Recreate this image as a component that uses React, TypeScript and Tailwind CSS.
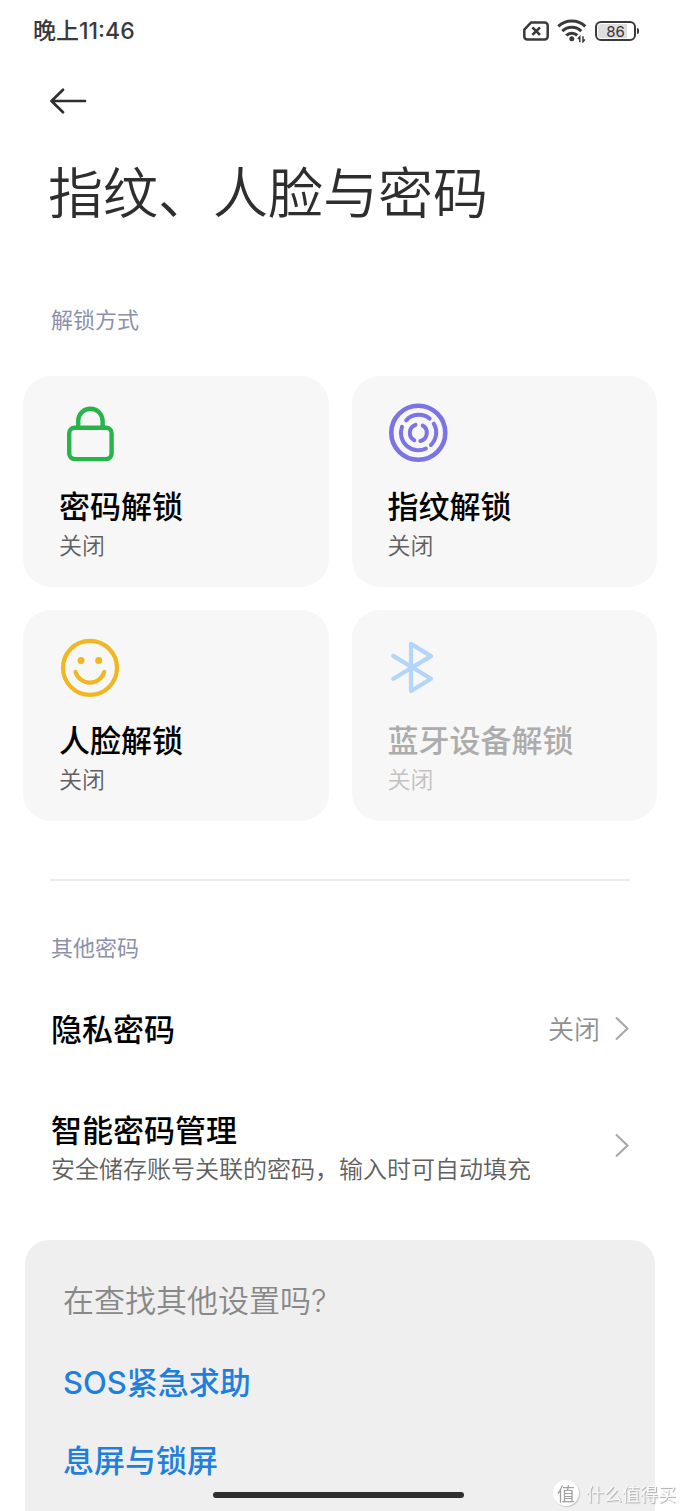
import type { ReactNode } from "react";

const LockIcon = () => (
  <svg viewBox="0 0 60 60" className="size-[60px]" fill="none" stroke="#28b44a" strokeWidth="4.4" aria-hidden="true">
    <rect x="10.2" y="24.7" width="42.4" height="31.4" rx="5.5" />
    <path d="M19.2 25V17.9a12.2 12.2 0 0 1 24.4 0V25" />
  </svg>
);

const FingerprintIcon = () => (
  <svg viewBox="0 0 60 60" className="size-[60px]" fill="none" stroke="#7b74e4" strokeLinecap="round" aria-hidden="true">
    <circle cx="30.3" cy="29.8" r="27" strokeWidth="4.6" />
    <g strokeWidth="4">
      <path d="M18.2 17.3A17.4 17.4 0 0 1 41.7 15.6" />
      <path d="M45.8 20.7A17.4 17.4 0 0 1 42.9 42" />
      <path d="M37.9 45.5A17.4 17.4 0 0 1 14 23.8" />
      <path d="M27.5 21.8A8.5 8.5 0 0 0 26.3 37.3" />
      <path d="M34.7 22.5A8.5 8.5 0 0 1 32.4 38" />
    </g>
  </svg>
);

const FaceIcon = () => (
  <svg viewBox="0 0 60 60" className="size-[60px]" fill="none" stroke="#f0b722" aria-hidden="true">
    <circle cx="31" cy="30.8" r="27" strokeWidth="4.2" />
    <path d="M16.5 34.8a15 15 0 0 0 28.8 0" strokeWidth="4.2" strokeLinecap="round" />
    <circle cx="22" cy="23.5" r="3.5" fill="#f0b722" stroke="none" />
    <circle cx="39.7" cy="23.5" r="3.5" fill="#f0b722" stroke="none" />
  </svg>
);

const BluetoothIcon = () => (
  <svg viewBox="0 0 60 60" className="size-[60px]" fill="none" stroke="#b3d5f8" strokeWidth="4.2" strokeLinecap="round" strokeLinejoin="round" aria-hidden="true">
    <path d="M5.3 18.9 43 41.8 23 54V6.9L43 19.1 5.3 41.7" />
  </svg>
);

const Chevron = () => (
  <svg viewBox="0 0 16 26" className="h-[26px] w-4 shrink-0" fill="none" stroke="#a6a6a6" strokeWidth="2" aria-hidden="true">
    <path d="M2 2.5 13.5 13.5 2 24.5" />
  </svg>
);

const StatusIcons = () => (
  <div className="flex items-center gap-2">
    <svg viewBox="0 0 26 20" className="h-5 w-[26px]" fill="none" stroke="#3a3a3a" aria-label="无SIM卡">
      <path d="M8.2 1.4H21.7a3 3 0 0 1 3 3V15.6a3 3 0 0 1-3 3H4.3a3 3 0 0 1-3-3V8.6Z" strokeWidth="2.5" strokeLinejoin="round" />
      <path d="m9.4 6.3 7.6 7.6m0-7.6-7.6 7.6" strokeWidth="2.6" />
    </svg>
    <svg viewBox="0 0 30 24" className="h-6 w-[30px]" fill="none" stroke="#3a3a3a" strokeWidth="3" aria-label="无线网络">
      <path d="M1.3 7.4a19.5 19.5 0 0 1 27 0" />
      <path d="M5.3 12.1a13.5 13.5 0 0 1 19 0" />
      <path d="M9.3 16.6a7.6 7.6 0 0 1 11-.2" />
      <circle cx="14.8" cy="19.8" r="2.5" fill="#3a3a3a" stroke="none" />
      <path d="M22.8 23.2v-5.4l-1.9 2.2M26 17.3v5.4l1.9-2.2" strokeWidth="1.5" />
    </svg>
    <div className="flex items-center gap-px">
      <div className="flex h-5 w-[41px] items-center justify-center rounded-[6px] border-2 border-[#3a3a3a] bg-[linear-gradient(90deg,#dedede_80%,#ffffff_80%)] bg-clip-content p-px">
        <span className="text-[15px] leading-none text-[#333]">86</span>
      </div>
      <div className="h-1.5 w-0.5 rounded-r-sm bg-[#3a3a3a]" />
    </div>
  </div>
);

type TileProps = { icon: ReactNode; title: string; state: string; disabled?: boolean };

const Tile = ({ icon, title, state, disabled = false }: TileProps) => (
  <button
    type="button"
    disabled={disabled}
    className="group flex flex-col items-start rounded-[28px] bg-[#f7f7f7] px-9 pt-[27px] pb-[27px] text-left"
  >
    {icon}
    <span className="mt-[19px] text-[31px] leading-[46px] font-medium text-black group-disabled:text-[#acacac]">{title}</span>
    <span className="text-[23px] leading-8 font-[350] text-[#606060] group-disabled:text-[#c2c2c2]">{state}</span>
  </button>
);

const tiles: TileProps[] = [
  { icon: <LockIcon />, title: "密码解锁", state: "关闭" },
  { icon: <FingerprintIcon />, title: "指纹解锁", state: "关闭" },
  { icon: <FaceIcon />, title: "人脸解锁", state: "关闭" },
  { icon: <BluetoothIcon />, title: "蓝牙设备解锁", state: "关闭", disabled: true },
];

const SectionLabel = ({ children }: { children: ReactNode }) => (
  <h2 className="px-[51px] text-[22px] leading-8 text-[#8c90a8]">{children}</h2>
);

export default function App() {
  return (
    <div className="flex min-h-screen flex-col bg-white font-['Noto_Sans_CJK_SC',sans-serif]">
      <header>
        <div className="flex h-[62px] items-center justify-between pr-[41px] pl-[33px] font-['Inter','Noto_Sans_CJK_SC',sans-serif]">
          <span className="text-[23px] leading-8 font-medium text-[#3a3a3a]">晚上11:46</span>
          <StatusIcons />
        </div>
        <div className="px-[49px] pt-6">
          <button type="button" aria-label="返回" className="block">
            <svg viewBox="0 0 38 30" className="h-[30px] w-[38px]" fill="none" stroke="#2e2e2e" strokeWidth="2.7" strokeLinecap="round" strokeLinejoin="round" aria-hidden="true">
              <path d="M14 3.8 2.5 15 14 26.2M2.5 15H36" />
            </svg>
          </button>
        </div>
        <h1 className="px-12 pt-[33px] text-[55px] leading-20 font-[350] text-[#2e2e2e]">指纹、人脸与密码</h1>
      </header>

      <main className="flex grow flex-col">
        <section className="pt-[73px]">
          <SectionLabel>解锁方式</SectionLabel>
          <div className="grid grid-cols-2 gap-[23px] px-[23px] pt-[42px]">
            {tiles.map((tile) => (
              <Tile key={tile.title} {...tile} />
            ))}
          </div>
        </section>

        <hr className="mx-[50px] mt-[58px] border-t-2 border-[#ececec]" />

        <section className="pt-[49px]">
          <SectionLabel>其他密码</SectionLabel>
          <a href="#privacy" className="mt-10 flex h-[52px] items-center justify-between pr-[50px] pl-[51px]">
            <span className="text-[31px] leading-[46px] font-medium text-black">隐私密码</span>
            <span className="flex items-center gap-3.5">
              <span className="text-[26px] leading-10 font-[350] text-[#909090]">关闭</span>
              <Chevron />
            </span>
          </a>
          <a href="#manager" className="mt-[52px] flex items-center justify-between pr-[50px] pl-[51px]">
            <span className="flex flex-col">
              <span className="text-[31px] leading-[46px] font-medium text-black">智能密码管理</span>
              <span className="text-[24px] leading-8 font-[350] text-[#606060]">安全储存账号关联的密码，输入时可自动填充</span>
            </span>
            <Chevron />
          </a>
        </section>

        <section className="mx-[25px] mt-14 grow rounded-t-[24px] bg-[#efefef] px-[38px] pt-9 font-['Inter','Noto_Sans_CJK_SC',sans-serif]">
          <h2 className="text-[31px] leading-[50px] font-[350] text-[#888888]">在查找其他设置吗?</h2>
          <ul className="flex flex-col gap-[30px] pt-[33px] text-[31px] leading-[48px] font-medium text-[#1e80dc]">
            <li><a href="#sos">SOS紧急求助</a></li>
            <li><a href="#lockscreen">息屏与锁屏</a></li>
          </ul>
        </section>
      </main>

      <div className="fixed inset-x-0 bottom-[13px] flex justify-center pr-1">
        <div className="h-1.5 w-[251px] rounded-full bg-[#2f2f2f]" />
      </div>
      <div className="fixed right-1 bottom-1 flex items-center gap-[7px]">
        <span className="flex size-[26px] items-center justify-center rounded-full bg-white text-[18px] leading-none text-[#a0a0a0] shadow-[1px_1px_1px_#c8c8c8]">值</span>
        <span className="text-[18px] leading-7 text-[#f8f8f8] [text-shadow:1px_1px_1px_#aaaaaa]">什么值得买</span>
      </div>
    </div>
  );
}
